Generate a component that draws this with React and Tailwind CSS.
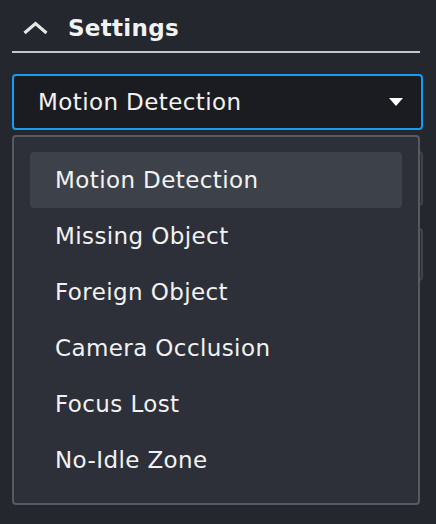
import React from 'react';

const OPTIONS = [
  'Motion Detection',
  'Missing Object',
  'Foreign Object',
  'Camera Occlusion',
  'Focus Lost',
  'No-Idle Zone',
];

const App = () => {
  const selected = 'Motion Detection';

  return (
    <div
      className="w-[436px] h-[524px] bg-[#25272e] px-3 text-[#f2f2f2] overflow-hidden"
      style={{ fontFamily: '"DejaVu Sans", Verdana, sans-serif' }}
    >
      {/* Section header */}
      <div className="flex items-center h-[51px] pt-[5px]">
        <svg className="ml-[11px] w-[25px] h-[14px]" viewBox="0 0 25 14" fill="none">
          <polyline
            points="1.5,12 12.5,2.5 23.5,12"
            stroke="#e6e6e6"
            strokeWidth="3.2"
            strokeLinejoin="miter"
          />
        </svg>
        <span className="ml-[20px] text-[23px] font-bold leading-none tracking-[0.3px]">Settings</span>
      </div>
      <div className="h-[2px] w-[408px] bg-[#c8c8c8]" />

      {/* Select + open menu */}
      <div className="relative mt-[21px] w-[411px]">
        <div className="flex items-center justify-between h-[56px] rounded-[4px] border-2 border-[#129cf2] bg-[#1b1c21] pl-[24px] pr-[18px]">
          <span className="text-[23px] leading-none tracking-[0.4px]">{selected}</span>
          <svg className="w-[14px] h-[8px]" viewBox="0 0 14 8">
            <polygon points="0,0 14,0 7,8" fill="#ffffff" />
          </svg>
        </div>

        <div className="absolute left-0 top-[61px] z-10 w-[408px] h-[370px] rounded-[4px] border-2 border-[#555960] bg-[#2d3038] pl-[16px] pr-[16px] pt-[15px]">
          {OPTIONS.map((opt) => (
            <div
              key={opt}
              className={
                opt === selected
                  ? 'flex items-center h-[56px] w-[372px] rounded-[4px] bg-[#3d424a] pl-[25px] text-[23px] leading-none tracking-[0.4px]'
                  : 'flex items-center h-[56px] w-[372px] pl-[25px] text-[23px] leading-none tracking-[0.4px]'
              }
            >
              {opt}
            </div>
          ))}
        </div>
      </div>

      {/* Fields hidden under the menu */}
      <div className="mt-[21px] w-[411px] h-[55px] rounded-[4px] border-2 border-[#3f434a] bg-[#2a2d34]" />
      <div className="mt-[22px] w-[411px] h-[53px] rounded-[4px] border-2 border-[#3f434a] bg-[#2a2d34]" />
    </div>
  );
};

export default App;
